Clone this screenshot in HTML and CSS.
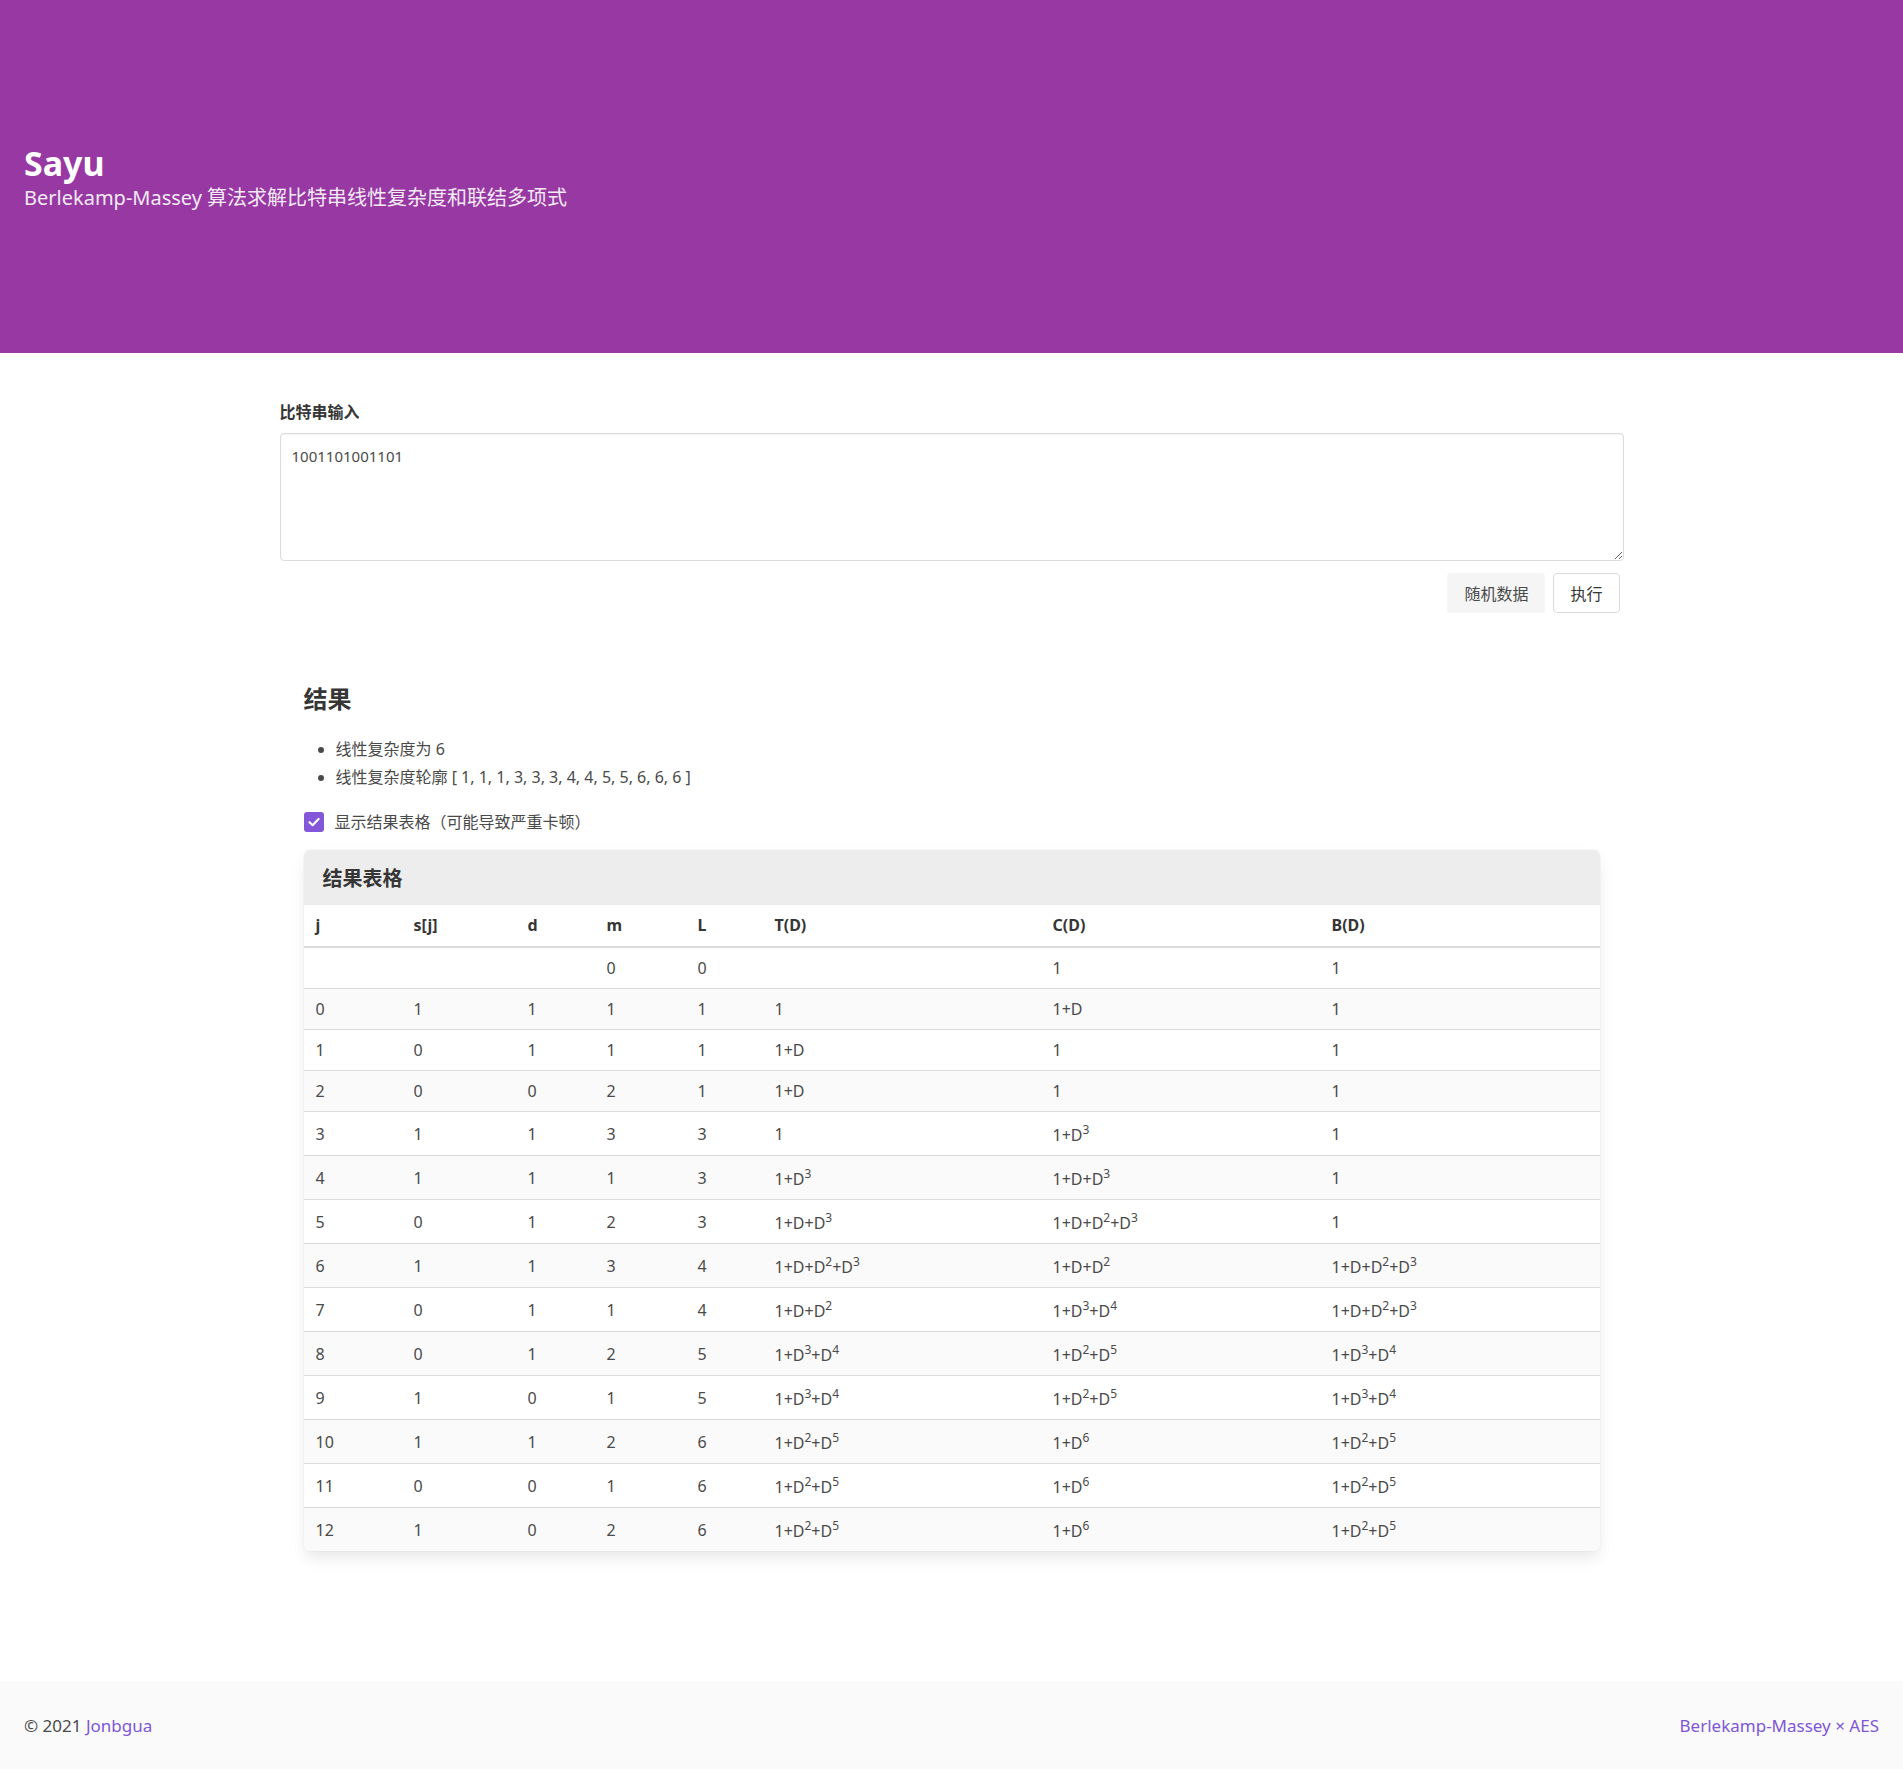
FILE: index.html
```html
<!DOCTYPE html>
<html lang="zh-CN">
<head>
<meta charset="utf-8">
<title>Sayu</title>
<link rel="stylesheet" href="styles.css">
</head>
<body>
<header class="hero">
  <div class="hero-body">
    <h1 class="title">Sayu</h1>
    <p class="subtitle">Berlekamp-Massey 算法求解比特串线性复杂度和联结多项式</p>
  </div>
</header>

<main class="main">
  <div class="container">
    <label class="field-label" for="bits">比特串输入</label>
    <textarea id="bits" class="textarea">1001101001101</textarea>
    <div class="buttons">
      <button class="btn btn-light">随机数据</button>
      <button class="btn btn-outline">执行</button>
    </div>

    <section class="results">
      <h2 class="results-title">结果</h2>
      <ul class="results-list">
        <li>线性复杂度为 6</li>
        <li>线性复杂度轮廓 [ 1, 1, 1, 3, 3, 3, 4, 4, 5, 5, 6, 6, 6 ]</li>
      </ul>
      <label class="check">
        <span class="check-box">
          <svg viewBox="0 0 20 20" width="20" height="20"><path d="M5.5 10.2 L8.6 13.2 L14.6 7" fill="none" stroke="#fff" stroke-width="2.2" stroke-linecap="round" stroke-linejoin="round"/></svg>
        </span>
        <span class="check-text">显示结果表格（可能导致严重卡顿）</span>
      </label>

      <div class="card">
        <div class="card-header">结果表格</div>
        <table class="table">
          <thead>
            <tr>
              <th class="c-j">j</th>
              <th class="c-s">s[j]</th>
              <th class="c-d">d</th>
              <th class="c-m">m</th>
              <th class="c-l">L</th>
              <th class="c-t">T(D)</th>
              <th class="c-c">C(D)</th>
              <th>B(D)</th>
            </tr>
          </thead>
          <tbody>
            <tr><td></td><td></td><td></td><td>0</td><td>0</td><td></td><td>1</td><td>1</td></tr>
            <tr><td>0</td><td>1</td><td>1</td><td>1</td><td>1</td><td>1</td><td>1+D</td><td>1</td></tr>
            <tr><td>1</td><td>0</td><td>1</td><td>1</td><td>1</td><td>1+D</td><td>1</td><td>1</td></tr>
            <tr><td>2</td><td>0</td><td>0</td><td>2</td><td>1</td><td>1+D</td><td>1</td><td>1</td></tr>
            <tr><td>3</td><td>1</td><td>1</td><td>3</td><td>3</td><td>1</td><td>1+D<sup>3</sup></td><td>1</td></tr>
            <tr><td>4</td><td>1</td><td>1</td><td>1</td><td>3</td><td>1+D<sup>3</sup></td><td>1+D+D<sup>3</sup></td><td>1</td></tr>
            <tr><td>5</td><td>0</td><td>1</td><td>2</td><td>3</td><td>1+D+D<sup>3</sup></td><td>1+D+D<sup>2</sup>+D<sup>3</sup></td><td>1</td></tr>
            <tr><td>6</td><td>1</td><td>1</td><td>3</td><td>4</td><td>1+D+D<sup>2</sup>+D<sup>3</sup></td><td>1+D+D<sup>2</sup></td><td>1+D+D<sup>2</sup>+D<sup>3</sup></td></tr>
            <tr><td>7</td><td>0</td><td>1</td><td>1</td><td>4</td><td>1+D+D<sup>2</sup></td><td>1+D<sup>3</sup>+D<sup>4</sup></td><td>1+D+D<sup>2</sup>+D<sup>3</sup></td></tr>
            <tr><td>8</td><td>0</td><td>1</td><td>2</td><td>5</td><td>1+D<sup>3</sup>+D<sup>4</sup></td><td>1+D<sup>2</sup>+D<sup>5</sup></td><td>1+D<sup>3</sup>+D<sup>4</sup></td></tr>
            <tr><td>9</td><td>1</td><td>0</td><td>1</td><td>5</td><td>1+D<sup>3</sup>+D<sup>4</sup></td><td>1+D<sup>2</sup>+D<sup>5</sup></td><td>1+D<sup>3</sup>+D<sup>4</sup></td></tr>
            <tr><td>10</td><td>1</td><td>1</td><td>2</td><td>6</td><td>1+D<sup>2</sup>+D<sup>5</sup></td><td>1+D<sup>6</sup></td><td>1+D<sup>2</sup>+D<sup>5</sup></td></tr>
            <tr><td>11</td><td>0</td><td>0</td><td>1</td><td>6</td><td>1+D<sup>2</sup>+D<sup>5</sup></td><td>1+D<sup>6</sup></td><td>1+D<sup>2</sup>+D<sup>5</sup></td></tr>
            <tr><td>12</td><td>1</td><td>0</td><td>2</td><td>6</td><td>1+D<sup>2</sup>+D<sup>5</sup></td><td>1+D<sup>6</sup></td><td>1+D<sup>2</sup>+D<sup>5</sup></td></tr>
          </tbody>
        </table>
      </div>
    </section>
  </div>
</main>

<footer class="footer">
  <div class="footer-left">© 2021 <a href="#" class="link">Jonbgua</a></div>
  <div class="footer-right"><a href="#" class="link">Berlekamp-Massey × AES</a></div>
</footer>
</body>
</html>
```

FILE: styles.css
```css
* { box-sizing: border-box; }

html, body {
  margin: 0;
  padding: 0;
}

body {
  font-family: "Noto Sans", "Noto Sans CJK SC", sans-serif;
  color: #4a4a4a;
  font-size: 16px;
  background: #fff;
  min-height: 100vh;
  display: flex;
  flex-direction: column;
}

/* Header */
.hero {
  background: #9838a3;
  height: 353px;
  display: flex;
  align-items: center;
  padding: 0 24px;
  flex-shrink: 0;
}

.hero-body { margin-top: -2px; }

.title {
  margin: 0;
  font-size: 34px;
  font-weight: 700;
  line-height: 44px;
  color: #fff;
}

.subtitle {
  margin: 0;
  font-size: 20px;
  line-height: 26px;
  color: #f2eaf4;
}

/* Main */
.main {
  padding: 47px 0 128px;
}

.container {
  width: 1344px;
  margin: 0 auto;
}

.field-label {
  display: block;
  font-size: 16px;
  line-height: 24px;
  font-weight: 700;
  color: #363636;
  margin-bottom: 9px;
}

.textarea {
  display: block;
  width: 100%;
  height: 128px;
  padding: 12px 11px;
  border: 1px solid #dbdbdb;
  border-radius: 4px;
  font-family: "Noto Sans", "Noto Sans CJK SC", sans-serif;
  font-size: 15px;
  line-height: 20px;
  color: #4a4a4a;
  resize: vertical;
  box-shadow: inset 0 1px 2px rgba(10,10,10,0.04);
}

.buttons {
  display: flex;
  justify-content: flex-end;
  gap: 8px;
  margin-top: 12px;
  padding-right: 4px;
}

.btn {
  height: 40px;
  padding: 0 16px;
  border-radius: 4px;
  font-family: "Noto Sans", "Noto Sans CJK SC", sans-serif;
  font-size: 16px;
  cursor: pointer;
}

.btn-light {
  background: #f5f5f5;
  border: 1px solid transparent;
  color: #4a4a4a;
}

.btn-outline {
  background: #fff;
  border: 1px solid #dbdbdb;
  color: #363636;
}

/* Results */
.results {
  padding: 0 24px;
  margin-top: 70px;
}

.results-title {
  margin: 0;
  font-size: 24px;
  line-height: 32px;
  font-weight: 700;
  color: #363636;
}

.results-list {
  margin: 20px 0 0;
  padding-left: 32px;
  font-size: 16px;
  line-height: 28px;
}

.check {
  display: flex;
  align-items: center;
  gap: 11px;
  margin-top: 19px;
  font-size: 16px;
  line-height: 24px;
}

.check-box {
  width: 20px;
  height: 20px;
  border-radius: 3px;
  background: #8257d8;
  display: flex;
}

.card {
  margin-top: 16px;
  background: #fff;
  border-radius: 6px;
  overflow: hidden;
  box-shadow: 0 8px 16px -2px rgba(10,10,10,0.1), 0 0 0 1px rgba(10,10,10,0.02);
}

.card-header {
  background: #ededed;
  height: 55px;
  display: flex;
  align-items: center;
  padding: 0 19px;
  font-size: 20px;
  font-weight: 700;
  color: #363636;
}

.table {
  width: 100%;
  border-collapse: collapse;
  font-size: 16px;
  color: #4a4a4a;
}

.table th {
  text-align: left;
  font-weight: 700;
  color: #363636;
  padding: 10px 12px;
  line-height: 21px;
  border-bottom: 2px solid #dbdbdb;
}

.table td {
  padding: 10px 12px;
  line-height: 20px;
  border-bottom: 1px solid #dbdbdb;
}

.table tbody tr:last-child td { border-bottom: none; }

.table tbody tr:nth-child(even) { background: #fafafa; }

.table sup {
  font-size: 12px;
  line-height: 15px;
  vertical-align: 7px;
}

.c-j { width: 98px; }
.c-s { width: 114px; }
.c-d { width: 79px; }
.c-m { width: 91px; }
.c-l { width: 77px; }
.c-t { width: 278px; }
.c-c { width: 279px; }

/* Footer */
.footer {
  margin-top: auto;
  background: #fafafa;
  height: 88px;
  padding: 0 24px;
  display: flex;
  align-items: center;
  justify-content: space-between;
  font-size: 17px;
  color: #4a4a4a;
  flex-shrink: 0;
}

.link {
  color: #7e57d6;
  text-decoration: none;
}
```
